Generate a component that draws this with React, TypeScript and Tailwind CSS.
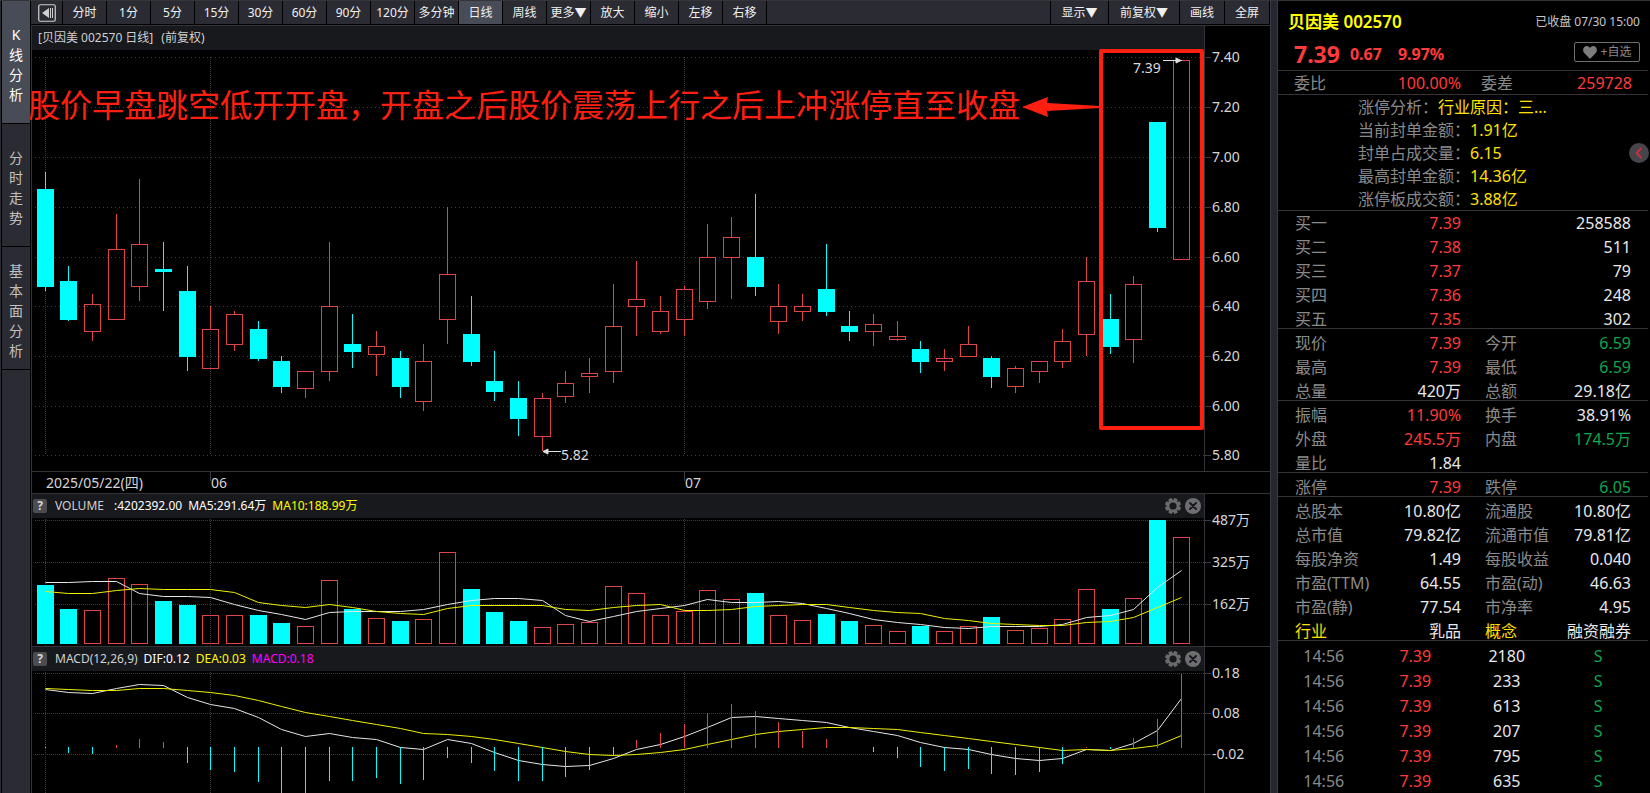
import type { ReactNode } from "react";

// [kind, high, body top, body bottom, low, volume top, ma5, ma10, dif, dea, macd]
// kind: 1 = rising (hollow red), 0 = falling (solid cyan)
const bars: number[][] = [
  [0, 172, 189, 287, 291, 585, 582, 591, 689, 688, 748],
  [0, 266, 281, 320, 321, 609, 582, 593, 692, 689, 753],
  [1, 294, 304, 332, 341, 610, 581, 593, 693, 690, 754],
  [1, 214, 249, 320, 320, 578, 581, 590, 688, 690, 745],
  [1, 179, 244, 287, 301, 584, 593, 588, 684, 688, 739],
  [0, 242, 269, 272, 311, 601, 596, 589, 685, 688, 742],
  [0, 266, 291, 357, 371, 605, 596, 589, 697, 690, 763],
  [1, 306, 329, 369, 369, 615, 597, 589, 704, 692, 770],
  [1, 311, 314, 345, 351, 615, 604, 592, 708, 695, 772],
  [0, 321, 329, 359, 361, 615, 610, 602, 717, 700, 782],
  [0, 356, 361, 387, 393, 623, 614, 605, 729, 706, 796],
  [1, 371, 371, 389, 398, 626, 619, 607, 736, 712, 796],
  [1, 242, 306, 372, 381, 580, 612, 604, 733, 716, 781],
  [0, 314, 344, 352, 368, 609, 611, 607, 737, 720, 781],
  [1, 331, 346, 355, 376, 618, 611, 611, 739, 724, 778],
  [0, 351, 358, 387, 398, 621, 611, 613, 747, 728, 784],
  [1, 344, 361, 402, 411, 619, 609, 614, 749, 733, 780],
  [1, 207, 274, 320, 344, 552, 604, 608, 739, 734, 758],
  [0, 296, 334, 362, 366, 589, 600, 605, 743, 736, 763],
  [0, 351, 381, 392, 401, 612, 598, 605, 752, 739, 771],
  [0, 381, 398, 419, 436, 621, 598, 605, 760, 743, 781],
  [1, 393, 398, 437, 451, 627, 600, 605, 764, 747, 781],
  [1, 371, 383, 397, 403, 624, 615, 609, 766, 751, 777],
  [1, 358, 373, 377, 393, 622, 621, 610, 765, 754, 770],
  [1, 284, 326, 372, 383, 586, 616, 607, 758, 755, 755],
  [1, 261, 299, 307, 336, 593, 611, 605, 749, 754, 740],
  [1, 296, 311, 332, 334, 615, 608, 604, 744, 752, 733],
  [1, 286, 289, 320, 336, 611, 605, 610, 736, 749, 724],
  [1, 224, 257, 302, 309, 590, 599, 610, 727, 744, 713],
  [1, 217, 237, 258, 299, 599, 602, 609, 717, 739, 704],
  [0, 194, 257, 287, 296, 593, 602, 606, 716, 734, 711],
  [1, 284, 306, 322, 334, 615, 601, 605, 718, 731, 722],
  [1, 294, 306, 312, 321, 620, 603, 604, 720, 729, 731],
  [0, 244, 289, 312, 316, 614, 608, 604, 722, 727, 739],
  [0, 311, 326, 332, 341, 621, 613, 607, 727, 727, 747],
  [1, 314, 324, 332, 346, 625, 619, 610, 731, 728, 752],
  [1, 321, 336, 340, 341, 631, 622, 612, 735, 729, 758],
  [0, 341, 349, 362, 373, 626, 624, 613, 742, 732, 767],
  [1, 349, 358, 362, 371, 631, 627, 618, 747, 735, 771],
  [1, 326, 344, 357, 357, 626, 628, 620, 749, 738, 769],
  [0, 356, 358, 377, 388, 617, 626, 623, 754, 741, 774],
  [1, 366, 368, 387, 393, 630, 626, 624, 758, 744, 775],
  [1, 361, 361, 372, 383, 628, 626, 625, 760, 747, 772],
  [1, 329, 341, 362, 368, 619, 624, 625, 758, 750, 764],
  [1, 257, 281, 335, 356, 589, 617, 622, 749, 749, 747],
  [0, 294, 319, 347, 354, 609, 615, 621, 750, 750, 749],
  [1, 276, 284, 340, 363, 598, 609, 617, 743, 748, 738],
  [0, 122, 122, 228, 232, 520, 587, 607, 730, 745, 719],
  [1, 60, 60, 260, 260, 537, 570, 597, 698, 735, 674],
];

const VOL_BASE = 644;
const MACD_ZERO = 747;
const months = [45, 210, 684];

const cx = (i: number) => Math.floor(45 + i * 23.67);
const line = (col: number) => bars.map((b, i) => `${cx(i)},${b[col]}`).join(" ");

const periods = ["分时", "1分", "5分", "15分", "30分", "60分", "90分", "120分", "多分钟", "日线", "周线", "更多▼", "放大", "缩小", "左移", "右移"];
const sideTabs = ["K线分析", "分时走势", "基本面分析"];

type Cell = [string, string];
const R = "text-[#ff3b3b]";
const G = "text-[#0aa84f]";
const W = "text-[#e8e8e8]";
const L = "text-[#8a8a8a]";
const Y = "text-[#ffe100]";

const quote: { rows: Cell[][] }[] = [
  {
    rows: [
      [["买一", L], ["7.39", R], ["", L], ["258588", W]],
      [["买二", L], ["7.38", R], ["", L], ["511", W]],
      [["买三", L], ["7.37", R], ["", L], ["79", W]],
      [["买四", L], ["7.36", R], ["", L], ["248", W]],
      [["买五", L], ["7.35", R], ["", L], ["302", W]],
    ],
  },
  {
    rows: [
      [["现价", L], ["7.39", R], ["今开", L], ["6.59", G]],
      [["最高", L], ["7.39", R], ["最低", L], ["6.59", G]],
      [["总量", L], ["420万", W], ["总额", L], ["29.18亿", W]],
    ],
  },
  {
    rows: [
      [["振幅", L], ["11.90%", R], ["换手", L], ["38.91%", W]],
      [["外盘", L], ["245.5万", R], ["内盘", L], ["174.5万", G]],
      [["量比", L], ["1.84", W], ["", L], ["", W]],
    ],
  },
  { rows: [[["涨停", L], ["7.39", R], ["跌停", L], ["6.05", G]]] },
  {
    rows: [
      [["总股本", L], ["10.80亿", W], ["流通股", L], ["10.80亿", W]],
      [["总市值", L], ["79.82亿", W], ["流通市值", L], ["79.81亿", W]],
      [["每股净资", L], ["1.49", W], ["每股收益", L], ["0.040", W]],
      [["市盈(TTM)", L], ["64.55", W], ["市盈(动)", L], ["46.63", W]],
      [["市盈(静)", L], ["77.54", W], ["市净率", L], ["4.95", W]],
      [["行业", Y], ["乳品", W], ["概念", Y], ["融资融券", W]],
    ],
  },
];

const analysis = [
  ["涨停分析：", "行业原因：三..."],
  ["当前封单金额：", "1.91亿"],
  ["封单占成交量：", "6.15"],
  ["最高封单金额：", "14.36亿"],
  ["涨停板成交额：", "3.88亿"],
];

const trades = ["2180", "233", "613", "207", "795", "635"];

function GearIcon() {
  return (
    <svg viewBox="0 0 16 16" className="size-4">
      <g fill="#6b6b6b">
        {[0, 45, 90, 135].map((a) => (
          <rect key={a} x="6" y="0" width="4" height="16" rx="1" transform={`rotate(${a + 22.5} 8 8)`} />
        ))}
        <circle cx="8" cy="8" r="6" />
      </g>
      <circle cx="8" cy="8" r="3.6" fill="#18191d" />
    </svg>
  );
}

function CloseIcon() {
  return (
    <svg viewBox="0 0 16 16" className="size-4">
      <circle cx="8" cy="8" r="8" fill="#6e6e6e" />
      <path d="M5 5l6 6M11 5l-6 6" stroke="#18191d" strokeWidth="2" strokeLinecap="round" />
    </svg>
  );
}

function PanelHeader({ children }: { children: ReactNode }) {
  return (
    <div className="flex h-6 shrink-0 items-center bg-[#18191d] pl-px pr-[3px] text-xs text-[#d0d0d0]">
      <button aria-label="指标说明" className="mr-2 size-3.5 rounded-xs bg-[#4b4c50] text-center text-xs leading-3.5 font-bold text-[#d8d8d8]">
        ?
      </button>
      <div className="flex flex-1 gap-1.5">{children}</div>
      <button aria-label="设置" className="mr-1"><GearIcon /></button>
      <button aria-label="关闭"><CloseIcon /></button>
    </div>
  );
}

// Dotted guides; y values are in the same space as the bar data
function Grid({ rows, top, dash }: { rows: number[]; top: number; dash: string }) {
  return (
    <g stroke="#3c3c3c" shapeRendering="crispEdges">
      {rows.map((y) => (
        <line key={y} x1="35" x2="1204" y1={y + 0.5} y2={y + 0.5} strokeDasharray={dash} />
      ))}
      {months.map((x) => (
        <line key={x} x1={x + 0.5} x2={x + 0.5} y1={top} y2={rows[rows.length - 1] + (rows.length > 3 ? 0 : 60)} strokeDasharray="1 1" />
      ))}
    </g>
  );
}

function Axis({ ticks, top }: { ticks: [number, string][]; top: number }) {
  return (
    <svg className="h-full w-full overflow-visible text-sm">
      {ticks.map(([y, label]) => (
        <g key={label}>
          <line x1="0" x2="6" y1={y - top + 0.5} y2={y - top + 0.5} stroke="#3a3a40" />
          <text x="7" y={y - top + 5} fill="#d6d6d6">{label}</text>
        </g>
      ))}
    </svg>
  );
}

function CandleChart() {
  return (
    <svg className="block h-[421px] w-full">
      <g transform="translate(-32 -50)">
        <Grid rows={[57, 107, 157, 207, 257, 306, 356, 406, 455]} top={57} dash="1 3" />
        <g shapeRendering="crispEdges">
          {bars.map(([up, hi, top, bottom, lo], i) => {
            const x = cx(i);
            return up ? (
              <g key={i} stroke="#e04545" fill="none">
                <path d={`M${x + 0.5} ${hi}V${top}M${x + 0.5} ${bottom}V${lo}`} />
                <rect x={x - 7.5} y={top + 0.5} width="16" height={bottom - top - 1} />
              </g>
            ) : (
              <g key={i} fill="#00ffff">
                <rect x={x} y={hi} width="1" height={lo - hi} />
                <rect x={x - 8} y={top} width="17" height={bottom - top} />
              </g>
            );
          })}
        </g>
        <g fill="#e0e0e0" stroke="#e0e0e0">
          <path d="M1163 60.5H1182M543 451.5H561" />
          <path d="M1176 58l5 2.5l-5 2.5zM548 449l-5 2.5l5 2.5z" />
        </g>
        <g fill="#dcdcdc" className="text-sm">
          <text x="1133" y="73">7.39</text>
          <text x="561" y="460">5.82</text>
        </g>
      </g>
    </svg>
  );
}

function VolumeChart() {
  return (
    <svg className="block h-32 w-full">
      <g transform="translate(-32 -518)">
        <Grid rows={[520, 562, 604]} top={519} dash="1 1" />
        <g shapeRendering="crispEdges">
          {bars.map((b, i) =>
            b[0] ? (
              <rect key={i} x={cx(i) - 7.5} y={b[5] + 0.5} width="16" height={VOL_BASE - b[5] - 1} fill="none" stroke="#e04545" />
            ) : (
              <rect key={i} x={cx(i) - 8} y={b[5]} width="17" height={VOL_BASE - b[5]} fill="#00ffff" />
            )
          )}
        </g>
        <g transform="translate(0.5 0.5)" fill="none">
          <polyline points={line(6)} stroke="#e6e6e6" />
          <polyline points={line(7)} stroke="#f0f000" />
        </g>
      </g>
    </svg>
  );
}

function MacdChart() {
  return (
    <svg className="block min-h-0 w-full flex-1">
      <g transform="translate(-32 -671)">
        <Grid rows={[673, 713, 754]} top={672} dash="1 1" />
        <g transform="translate(0.5 0.5)" fill="none">
          <polyline points={line(8)} stroke="#e6e6e6" />
          <polyline points={line(9)} stroke="#f0f000" />
        </g>
        <g shapeRendering="crispEdges">
          {bars.map((b, i) => {
            const up = b[10] < MACD_ZERO || i === 44;
            if (b[10] === MACD_ZERO && !up) return null;
            return up ? (
              <rect key={i} x={cx(i)} y={b[10]} width="1" height={MACD_ZERO + 1 - b[10]} fill="#e04545" />
            ) : (
              <rect key={i} x={cx(i)} y={MACD_ZERO} width="1" height={b[10] - MACD_ZERO} fill="#00ffff" />
            );
          })}
        </g>
      </g>
    </svg>
  );
}

function Toolbar() {
  const btn = "border-r border-black whitespace-nowrap text-xs text-[#f0f0f0]";
  return (
    <div className="flex h-6 shrink-0 border-b border-black bg-[#2b2b33]">
      <button aria-label="收起" className={`${btn} flex w-8 items-center justify-center`}>
        <svg viewBox="0 0 18 18" className="size-[18px]">
          <rect x="0.75" y="0.75" width="16.5" height="16.5" rx="1.5" fill="none" stroke="#d0d0d0" strokeWidth="1.2" />
          <path d="M4 9l7-5v10zM12 4h1v10h-1zM14 4h1v10h-1z" fill="#d0d0d0" />
        </svg>
      </button>
      {periods.map((p) => (
        <button key={p} className={`${btn} w-11 ${p === "日线" ? "bg-[#474c57]" : ""}`}>{p}</button>
      ))}
      <div className="flex-1 border-r border-black" />
      <button className={`${btn} w-[58px]`}>显示▼</button>
      <button className={`${btn} w-[71px]`}>前复权▼</button>
      <button className={`${btn} w-[45px]`}>画线</button>
      <button className={`${btn} w-[45px]`}>全屏</button>
    </div>
  );
}

function QuotePanel() {
  return (
    <aside className="relative w-[372px] shrink-0 overflow-hidden pr-0.5 text-base">
      <div className="flex h-[37px] items-center justify-between pt-1 pr-2 pl-2.5">
        <h1 className="text-[17px] font-semibold text-[#ffff00]">贝因美 002570</h1>
        <span className="text-xs text-[#c8c8c8]">已收盘 07/30 15:00</span>
      </div>
      <div className="flex h-8 items-center pr-2 pl-4 font-bold text-[#ff3b3b]">
        <span className="mr-2.5 text-[23px]">7.39</span>
        <span className="mr-4 text-base">0.67</span>
        <span className="flex-1 text-base">9.97%</span>
        <button className="mb-1 flex h-5 w-[66px] items-center justify-center gap-1 rounded-xs border border-[#6f6f6f] text-xs font-normal text-[#8a8a8a]">
          <svg viewBox="0 0 14 13" className="h-[13px] w-3.5">
            <path d="M7 13L1 6.800C-1 4 0.500 0 3.800 0C5.400 0 6.500 1 7 2C7.500 1 8.600 0 10.200 0C13.500 0 15 4 13 6.800Z" fill="#7d7d7d" />
          </svg>
          +自选
        </button>
      </div>
      <div className="flex h-[25px] items-center border-y border-[#333338] pr-4 pl-4">
        <span className={L}>委比</span>
        <span className={`w-[135px] text-right ${R}`}>100.00%</span>
        <span className={`ml-5 ${L}`}>委差</span>
        <span className={`flex-1 text-right ${R}`}>259728</span>
      </div>
      <dl className="border-b border-[#333338] pl-20">
        {analysis.map(([k, v]) => (
          <div key={k} className="flex h-[23px] items-center">
            <dt className={L}>{k}</dt>
            <dd className={Y}>{v}</dd>
          </div>
        ))}
      </dl>
      <table className="w-full table-fixed border-separate border-spacing-0 leading-[18px]">
        <colgroup>
          <col className="w-[100px]" />
          <col className="w-[83px]" />
          <col className="w-[90px]" />
          <col />
        </colgroup>
        {quote.map((g, gi) => (
          <tbody key={gi}>
            {g.rows.map((row, ri) => (
              <tr key={ri}>
                {row.map(([t, c], ci) => {
                  const pad = gi === 0 && ri === 0 ? "pt-[3px]" : "pt-[5px]";
                  const rule = ri === g.rows.length - 1 ? "border-[#333338]" : "border-transparent";
                  const side = ci === 0 ? "pl-[17px] text-left" : ci === 2 ? "pl-6 text-left" : ci === 3 ? "pr-[17px] text-right" : "text-right";
                  return (
                    <td key={ci} className={`border-b whitespace-nowrap ${pad} ${rule} ${side} ${c}`}>{t}</td>
                  );
                })}
              </tr>
            ))}
          </tbody>
        ))}
      </table>
      <div className="pt-[3px] pr-1">
        <table className="w-full table-fixed text-center leading-[25px]">
          <tbody>
            {trades.map((v) => (
              <tr key={v}>
                <td className={L}>14:56</td>
                <td className={R}>7.39</td>
                <td className={W}>{v}</td>
                <td className={G}>S</td>
              </tr>
            ))}
          </tbody>
        </table>
      </div>
      <button aria-label="展开" className="absolute top-[142px] right-px size-5 rounded-full bg-[#45454b]">
        <svg viewBox="0 0 20 20" className="size-5">
          <path d="M12.500 5L7.500 10l5 5" fill="none" stroke="#d03038" strokeWidth="1.800" />
        </svg>
      </button>
    </aside>
  );
}

export default function App() {
  return (
    <div className="relative flex h-screen overflow-hidden border-t border-[#333338] bg-black font-['Noto_Sans','Noto_Sans_CJK_SC',sans-serif]">
      <nav className="flex w-[31px] shrink-0 flex-col gap-px border-l border-[#2c2c30] px-px">
        {sideTabs.map((t, i) => (
          <button
            key={t}
            className={`flex h-[122px] items-center justify-center pt-1.5 text-sm leading-5 ${i === 0 ? "bg-[#474c57] text-white" : "bg-[#2b2b33] text-[#c0c0c0]"}`}
          >
            <span className="w-3.5 break-all">{t}</span>
          </button>
        ))}
        <div className="flex-1 bg-[#2b2b33]" />
      </nav>

      <main className="flex min-w-0 flex-1 flex-col">
        <Toolbar />
        <div className="flex min-h-0 flex-1 flex-col border-t border-l border-[#333338]">
          <section className="flex border-b border-[#333338]">
            <div className="min-w-0 flex-1">
              <div className="flex h-6 items-center gap-2 bg-[#18191d] pl-1.5 text-xs text-[#d0d0d0]">
                <span>[贝因美 002570 日线]</span>
                <span>(前复权)</span>
              </div>
              <CandleChart />
            </div>
            <div className="w-[66px] border-l border-[#333338]">
              <Axis top={26} ticks={[[57, "7.40"], [107, "7.20"], [157, "7.00"], [207, "6.80"], [257, "6.60"], [306, "6.40"], [356, "6.20"], [406, "6.00"], [455, "5.80"]]} />
            </div>
          </section>

          <div className="h-[22px] shrink-0 border-b border-[#333338]">
            <svg className="block h-full w-full text-sm" fill="#d6d6d6">
              <path d="M178.500 0v9M652.500 0v9" stroke="#3a3a40" />
              <text x="14" y="16">2025/05/22(四)</text>
              <text x="179" y="16">06</text>
              <text x="653" y="16">07</text>
            </svg>
          </div>

          <section className="flex border-b border-[#333338]">
            <div className="min-w-0 flex-1">
              <PanelHeader>
                <span>VOLUME</span>
                <span className="ml-1 text-white">:4202392.00</span>
                <span className="text-white">MA5:291.64万</span>
                <span className="text-[#ffff00]">MA10:188.99万</span>
              </PanelHeader>
              <VolumeChart />
            </div>
            <div className="w-[66px] border-l border-[#333338]">
              <Axis top={494} ticks={[[520, "487万"], [562, "325万"], [604, "162万"]]} />
            </div>
          </section>

          <section className="flex min-h-0 flex-1">
            <div className="flex min-w-0 flex-1 flex-col">
              <PanelHeader>
                <span>MACD(12,26,9)</span>
                <span className="text-white">DIF:0.12</span>
                <span className="text-[#ffff00]">DEA:0.03</span>
                <span className="text-[#ff00ff]">MACD:0.18</span>
              </PanelHeader>
              <MacdChart />
            </div>
            <div className="w-[66px] border-l border-[#333338]">
              <Axis top={647} ticks={[[673, "0.18"], [713, "0.08"], [754, "-0.02"]]} />
            </div>
          </section>
        </div>
      </main>

      <div className="w-2 shrink-0 border-x border-[#3a3a42] bg-[#25262f]" />
      <QuotePanel />

      {/* hand-drawn note over the chart */}
      <p className="absolute top-[88px] left-7 text-[32px] leading-8 whitespace-nowrap text-[#ff1f10]">
        股价早盘跳空低开开盘，开盘之后股价震荡上行之后上冲涨停直至收盘
      </p>
      <svg className="pointer-events-none absolute top-0 left-[1020px] h-[440px] w-[190px]">
        <g transform="translate(-1020 -1)">
          <rect x="1101" y="51" width="101" height="377" fill="none" stroke="#ff1f10" strokeWidth="4" strokeLinejoin="round" />
          <path d="M1022 107L1048 97L1047 103L1100 106V108L1047 111L1048 117Z" fill="#ff1f10" />
        </g>
      </svg>
    </div>
  );
}
